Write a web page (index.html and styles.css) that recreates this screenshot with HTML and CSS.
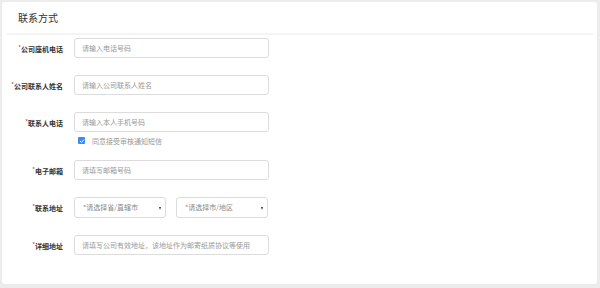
FILE: index.html
```html
<!DOCTYPE html>
<html lang="zh-CN">
<head>
    <meta charset="UTF-8">
    <meta name="viewport" content="width=device-width, initial-scale=1.0">
    <title>联系方式</title>
    <link rel="stylesheet" href="styles.css">
</head>
<body>
    <div class="card">
        <div class="card-header">联系方式</div>
        <form class="contact-form">
            <div class="form-row">
                <label class="form-label"><span class="required">*</span>公司座机电话</label>
                <input type="text" class="form-input" placeholder="请输入电话号码">
            </div>
            <div class="form-row">
                <label class="form-label"><span class="required">*</span>公司联系人姓名</label>
                <input type="text" class="form-input" placeholder="请输入公司联系人姓名">
            </div>
            <div class="form-row">
                <label class="form-label"><span class="required">*</span>联系人电话</label>
                <div class="form-field">
                    <input type="text" class="form-input" placeholder="请输入本人手机号码">
                    <label class="agree">
                        <span class="checkbox">
                            <svg viewBox="0 0 8 8" width="6" height="6"><path d="M1.3 4.1 L3.2 5.9 L6.8 2" fill="none" stroke="#fff" stroke-width="1.3"/></svg>
                        </span>
                        同意接受审核通知短信
                    </label>
                </div>
            </div>
            <div class="form-row">
                <label class="form-label"><span class="required">*</span>电子邮箱</label>
                <input type="text" class="form-input" placeholder="请填写邮箱号码">
            </div>
            <div class="form-row">
                <label class="form-label"><span class="required">*</span>联系地址</label>
                <div class="select-group">
                    <div class="form-select">*请选择省/直辖市<span class="arrow"></span></div>
                    <div class="form-select">*请选择市/地区<span class="arrow"></span></div>
                </div>
            </div>
            <div class="form-row">
                <label class="form-label"><span class="required">*</span>详细地址</label>
                <input type="text" class="form-input" placeholder="请填写公司有效地址，该地址作为邮寄纸质协议等使用">
            </div>
        </form>
    </div>
</body>
</html>
```

FILE: styles.css
```css
body {
    margin: 0;
    padding: 2px 3px 4px 2px;
    background-color: #ececec;
    font-family: "Noto Sans CJK SC", "Noto Sans", sans-serif;
}

.card {
    height: 282px;
    box-sizing: border-box;
    background-color: #fff;
    border-radius: 3px;
}

.card-header {
    margin: 0 4px 0 5px;
    padding-left: 11px;
    height: 31px;
    line-height: 32px;
    font-size: 10px;
    color: #333;
    border-bottom: 2px solid #f4f4f4;
}

.contact-form {
    padding-top: 3px;
}

.form-row {
    display: flex;
    align-items: flex-start;
    margin-bottom: 17px;
}

.form-label {
    width: 61px;
    margin-right: 11px;
    height: 20px;
    line-height: 20px;
    text-align: right;
    font-size: 7px;
    font-weight: bold;
    color: #333;
    white-space: nowrap;
}

.required {
    color: #e03030;
    font-weight: normal;
    font-size: 6px;
    vertical-align: 2px;
}

.form-input {
    width: 195px;
    height: 20px;
    box-sizing: border-box;
    padding: 0 7px;
    border: 1px solid #dcdcdc;
    border-radius: 3px;
    font-family: inherit;
    font-size: 7px;
    outline: none;
}

.form-input::placeholder {
    color: #999;
}

.form-field {
    display: flex;
    flex-direction: column;
}

.agree {
    display: flex;
    align-items: center;
    margin: 4px 0 -2px 4px;
    height: 9px;
    font-size: 7px;
    color: #999;
}

.checkbox {
    display: flex;
    align-items: center;
    justify-content: center;
    width: 7px;
    height: 7px;
    margin-right: 7px;
    background-color: #3d8bf2;
    border-radius: 1px;
}

.select-group {
    display: flex;
    gap: 10px;
}

.form-select {
    position: relative;
    width: 92px;
    height: 21px;
    box-sizing: border-box;
    padding-left: 8px;
    line-height: 19px;
    border: 1px solid #dcdcdc;
    border-radius: 3px;
    font-size: 7px;
    color: #888;
}

.arrow {
    position: absolute;
    right: 4px;
    top: 9px;
    border-left: 1.5px solid transparent;
    border-right: 1.5px solid transparent;
    border-top: 3px solid #333;
}
```
